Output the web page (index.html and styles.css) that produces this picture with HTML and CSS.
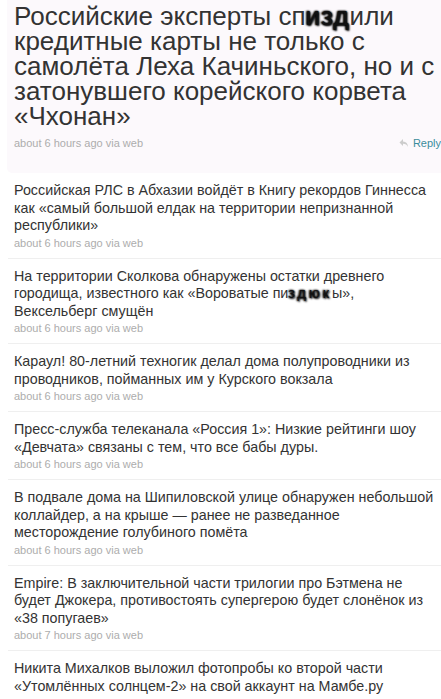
FILE: index.html
```html
<!DOCTYPE html>
<html lang="ru">
<head>
  <meta charset="UTF-8" />
  <title>Твиттер</title>
  <link rel="stylesheet" href="styles.css">
</head>
<body>
  <div class="status">
    <h1 class="status-text">Российские эксперты сп<span class="blot">изд</span>или кредитные карты не только с самолёта Леха Качиньского, но и с затонувшего корейского корвета «Чхонан»</h1>
    <div class="status-meta">
      <span class="meta">about 6 hours ago via web</span>
      <a class="reply">
        <svg width="10" height="10" viewBox="0 0 10 10"><path d="M4 1 L0.5 4.5 L4 8 V5.7 C6.5 5.7 8 6.6 9 9 C9 5.5 7 3.6 4 3.4 Z" fill="#ccc"/></svg>
        Reply
      </a>
    </div>
  </div>

  <ul class="timeline">
    <li class="tweet">
      <p class="tweet-text">Российская РЛС в Абхазии войдёт в Книгу рекордов Гиннесса как «самый большой елдак на территории непризнанной республики»</p>
      <span class="meta">about 6 hours ago via web</span>
    </li>
    <li class="tweet">
      <p class="tweet-text">На территории Сколкова обнаружены остатки древнего городища, известного как «Вороватые пи<span class="blot wide">здюк</span>ы», Вексельберг смущён</p>
      <span class="meta">about 6 hours ago via web</span>
    </li>
    <li class="tweet">
      <p class="tweet-text">Караул! 80-летний техногик делал дома полупроводники из проводников, пойманных им у Курского вокзала</p>
      <span class="meta">about 6 hours ago via web</span>
    </li>
    <li class="tweet">
      <p class="tweet-text">Пресс-служба телеканала «Россия 1»: Низкие рейтинги шоу «Девчата» связаны с тем, что все бабы дуры.</p>
      <span class="meta">about 6 hours ago via web</span>
    </li>
    <li class="tweet">
      <p class="tweet-text">В подвале дома на Шипиловской улице обнаружен небольшой коллайдер, а на крыше — ранее не разведанное месторождение голубиного помёта</p>
      <span class="meta">about 6 hours ago via web</span>
    </li>
    <li class="tweet">
      <p class="tweet-text">Empire: В заключительной части трилогии про Бэтмена не будет Джокера, противостоять супергерою будет слонёнок из «38 попугаев»</p>
      <span class="meta">about 7 hours ago via web</span>
    </li>
    <li class="tweet">
      <p class="tweet-text">Никита Михалков выложил фотопробы ко второй части «Утомлённых солнцем-2» на свой аккаунт на Мамбе.ру</p>
      <span class="meta">about 7 hours ago via web</span>
    </li>
  </ul>
</body>
</html>
```

FILE: styles.css
```css
body {
  margin: 0;
  background: #fff;
  font-family: "Liberation Sans", Arial, sans-serif;
  color: #333;
  overflow: hidden;
}
.status {
  background: #fcf9fc;
  margin-left: 7px;
  padding: 4px 0 24px 7px;
  border-bottom-left-radius: 5px;
}
.status-text {
  margin: 0;
  font-size: 26px;
  font-weight: normal;
  line-height: 25px;
  color: #333;
  width: 430px;
}
.status-meta {
  display: flex;
  justify-content: space-between;
  align-items: center;
  margin-top: 8px;
}
.meta {
  font-size: 11px;
  color: #adadad;
  display: block;
}
.reply {
  font-size: 11px;
  color: #3b8d9c;
  display: flex;
  align-items: center;
  gap: 4px;
  margin-right: 0;
}
.blot {
  color: #111;
  text-shadow: 0 0 2px #000, 1px 1px 2px #000, -1px 0 2px #000;
  letter-spacing: 1px;
}
.blot.wide {
  letter-spacing: 3px;
}
.timeline {
  list-style: none;
  margin: 0 0 0 8px;
  padding: 0;
}
.tweet {
  border-bottom: 1px solid #efefef;
  padding: 9px 0 9px 6px;
}
.tweet-text {
  margin: 0;
  font-size: 14.3px;
  line-height: 17.5px;
  color: #333;
  width: 421px;
}
.tweet .meta {
  margin-top: 2px;
}
```
